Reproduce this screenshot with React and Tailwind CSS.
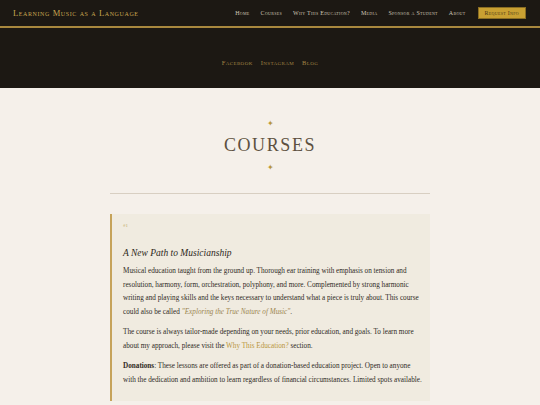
import React from 'react';

const nav = ['Home', 'Courses', 'Why This Education?', 'Media', 'Sponsor a Student', 'About'];
const socials = ['Facebook', 'Instagram', 'Blog'];

const caps = { fontVariantCaps: 'small-caps' };

const Line = ({ children }) => <span className="block whitespace-nowrap">{children}</span>;

const App = () => {
    return (
        <div className="min-h-[405px] bg-[#f5f0ea] font-['Liberation_Serif',serif]">
            {/* header */}
            <header className="h-[28px] bg-[#1c1813] border-b-2 border-[#a8883e] flex items-center justify-between pl-[13px] pr-[14px]">
                <div className="text-[8.5px] tracking-[0.6px] text-[#c8a650]" style={caps}>Learning Music as a Language</div>
                <nav className="flex items-center gap-[11px]">
                    {nav.map(n => (
                        <span key={n} className="text-[6px] tracking-[0.3px] text-[#cfc6b6]" style={caps}>{n}</span>
                    ))}
                    <span className="ml-[1px] bg-[#c9a032] border border-[#8a6d22] px-[6px] h-[12px] flex items-center text-[6px] tracking-[0.3px] text-[#4a3a14]" style={caps}>Request Info</span>
                </nav>
            </header>

            {/* social band */}
            <div className="h-[60px] bg-[#1c1813] flex items-center justify-center gap-[8px] pt-[10px]">
                {socials.map(s => (
                    <span key={s} className="text-[6.5px] tracking-[0.4px] text-[#a08444]" style={caps}>{s}</span>
                ))}
            </div>

            {/* title */}
            <div className="flex flex-col items-center pt-[32px]">
                <span className="text-[#b8963c] text-[8px] leading-[8px]">✦</span>
                <h1 className="mt-[6px] text-[18px] leading-[22px] tracking-[1.6px] text-[#5d5040] uppercase">Courses</h1>
                <span className="mt-[8px] text-[#b8963c] text-[8px] leading-[8px]">✦</span>
            </div>

            <div className="mx-auto mt-[21px] w-[320px] h-px bg-[#d8cfc2]" />

            {/* card */}
            <div className="mx-auto mt-[20px] w-[320px] bg-[#f0ebe0] border-l-2 border-[#c6a35a] pl-[11px] pr-[8px] pt-[8px] pb-[14px]">
                <div className="text-[5px] leading-[7px] text-[#c4ac6e]">#1</div>
                <h2 className="mt-[18px] italic text-[9.5px] leading-[12px] text-[#2e2820]">A New Path to Musicianship</h2>
                <div className="mt-[6px] text-[7.2px] leading-[13.5px] text-[#2f2a24]">
                    <p>
                        <Line>Musical education taught from the ground up. Thorough ear training with emphasis on tension and</Line>
                        <Line>resolution, harmony, form, orchestration, polyphony, and more. Complemented by strong harmonic</Line>
                        <Line>writing and playing skills and the keys necessary to understand what a piece is truly about. This course</Line>
                        <Line>could also be called <em className="text-[#9c8650]">"Exploring the True Nature of Music"</em>.</Line>
                    </p>
                    <p className="mt-[7px]">
                        <Line>The course is always tailor-made depending on your needs, prior education, and goals. To learn more</Line>
                        <Line>about my approach, please visit the <span className="text-[#b8963c]">Why This Education?</span> section.</Line>
                    </p>
                    <p className="mt-[7px]">
                        <Line><span className="font-bold">Donations</span>: These lessons are offered as part of a donation-based education project. Open to anyone</Line>
                        <Line>with the dedication and ambition to learn regardless of financial circumstances. Limited spots available.</Line>
                    </p>
                </div>
            </div>
        </div>
    );
};
export default App;
